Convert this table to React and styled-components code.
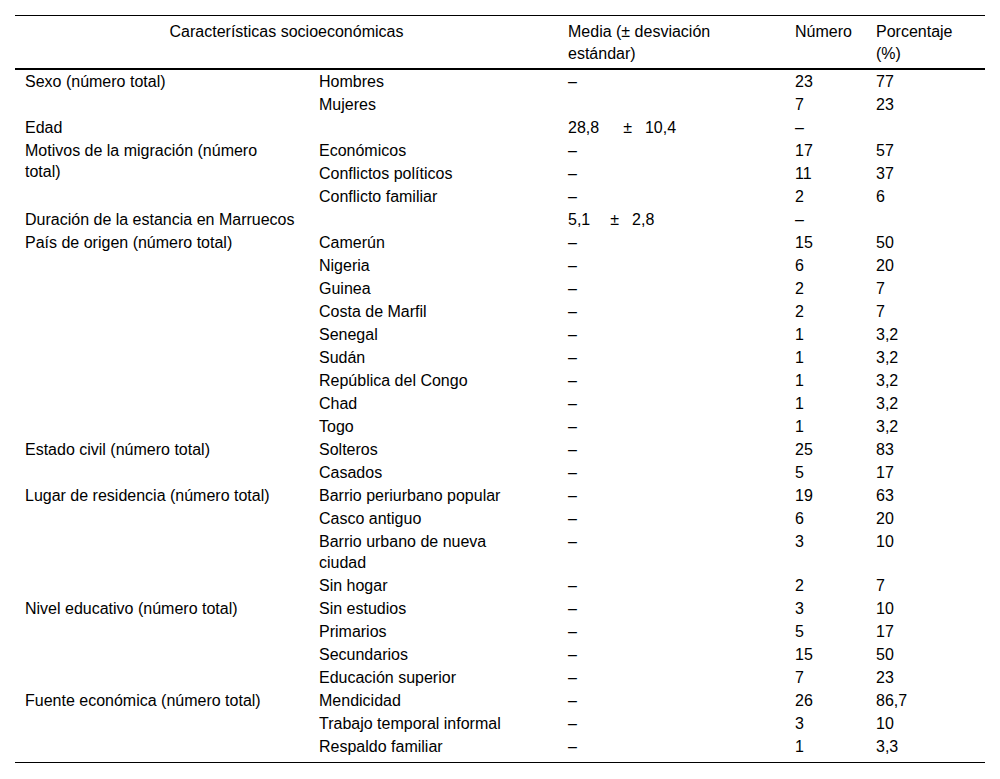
import React from "react";
import styled, { createGlobalStyle } from "styled-components";

const GlobalStyle = createGlobalStyle`
  html, body {
    margin: 0;
    padding: 0;
    background: #ffffff;
  }
  body {
    font-family: "Liberation Sans", Arial, sans-serif;
    font-size: 16px;
    color: #000;
  }
`;

const Page = styled.div`
  padding: 15px;
`;

const Table = styled.table`
  width: 970px;
  table-layout: fixed;
  border-collapse: collapse;
  border-top: 1px solid #000;
  border-bottom: 1px solid #000;
`;

const HeadRow = styled.tr`
  border-bottom: 2px solid #000;
`;

const HeadCell = styled.th`
  font-weight: normal;
  text-align: ${(p) => (p.$center ? "center" : "left")};
  vertical-align: top;
  line-height: 22px;
  padding: 5px ${(p) => (p.$center ? "10px" : p.$narrow ? "4px" : "24px")} 3px 10px;
`;

const Body = styled.tbody`
  tr:last-child td {
    padding-bottom: 5px;
  }
`;

const Cell = styled.td`
  vertical-align: top;
  line-height: 21px;
  padding: 1px ${(p) => (p.$narrow ? "4px" : "24px")} 1px 10px;
`;

const Mean = styled.span`
  display: inline-flex;
  white-space: nowrap;
`;

const Part = styled.span`
  margin-left: ${(p) => p.$gap || 0}px;
`;

const D = "–";

const groups = [
  {
    label: "Sexo (número total)",
    items: [
      ["Hombres", D, "23", "77"],
      ["Mujeres", "", "7", "23"],
    ],
  },
  { label: "Edad", mean: { a: "28,8", g1: 24, g2: 13, b: "10,4" }, n: D, p: "" },
  {
    label: "Motivos de la migración (número total)",
    items: [
      ["Económicos", D, "17", "57"],
      ["Conflictos políticos", D, "11", "37"],
      ["Conflicto familiar", D, "2", "6"],
    ],
  },
  {
    label: "Duración de la estancia en Marruecos",
    mean: { a: "5,1", g1: 20, g2: 13, b: "2,8" },
    n: D,
    p: "",
  },
  {
    label: "País de origen (número total)",
    items: [
      ["Camerún", D, "15", "50"],
      ["Nigeria", D, "6", "20"],
      ["Guinea", D, "2", "7"],
      ["Costa de Marfil", D, "2", "7"],
      ["Senegal", D, "1", "3,2"],
      ["Sudán", D, "1", "3,2"],
      ["República del Congo", D, "1", "3,2"],
      ["Chad", D, "1", "3,2"],
      ["Togo", D, "1", "3,2"],
    ],
  },
  {
    label: "Estado civil (número total)",
    items: [
      ["Solteros", D, "25", "83"],
      ["Casados", D, "5", "17"],
    ],
  },
  {
    label: "Lugar de residencia (número total)",
    items: [
      ["Barrio periurbano popular", D, "19", "63"],
      ["Casco antiguo", D, "6", "20"],
      ["Barrio urbano de nueva ciudad", D, "3", "10"],
      ["Sin hogar", D, "2", "7"],
    ],
  },
  {
    label: "Nivel educativo (número total)",
    items: [
      ["Sin estudios", D, "3", "10"],
      ["Primarios", D, "5", "17"],
      ["Secundarios", D, "15", "50"],
      ["Educación superior", D, "7", "23"],
    ],
  },
  {
    label: "Fuente económica (número total)",
    items: [
      ["Mendicidad", D, "26", "86,7"],
      ["Trabajo temporal informal", D, "3", "10"],
      ["Respaldo familiar", D, "1", "3,3"],
    ],
  },
];

function GroupRows({ group }) {
  if (!group.items) {
    const m = group.mean;
    return (
      <tr>
        <Cell colSpan={2}>{group.label}</Cell>
        <Cell>
          <Mean>
            <span>{m.a}</span>
            <Part $gap={m.g1}>±</Part>
            <Part $gap={m.g2}>{m.b}</Part>
          </Mean>
        </Cell>
        <Cell $narrow>{group.n}</Cell>
        <Cell>{group.p}</Cell>
      </tr>
    );
  }
  return group.items.map((it, i) => (
    <tr key={it[0]}>
      {i === 0 && <Cell rowSpan={group.items.length}>{group.label}</Cell>}
      <Cell>{it[0]}</Cell>
      <Cell>{it[1]}</Cell>
      <Cell $narrow>{it[2]}</Cell>
      <Cell>{it[3]}</Cell>
    </tr>
  ));
}

export default function App() {
  return (
    <Page>
      <GlobalStyle />
      <Table>
        <colgroup>
          <col style={{ width: 294 }} />
          <col style={{ width: 249 }} />
          <col style={{ width: 227 }} />
          <col style={{ width: 81 }} />
          <col style={{ width: 119 }} />
        </colgroup>
        <thead>
          <HeadRow>
            <HeadCell colSpan={2} $center>
              Características socioeconómicas
            </HeadCell>
            <HeadCell>Media (± desviación estándar)</HeadCell>
            <HeadCell $narrow>Número</HeadCell>
            <HeadCell>Porcentaje (%)</HeadCell>
          </HeadRow>
        </thead>
        <Body>
          {groups.map((g) => (
            <GroupRows key={g.label} group={g} />
          ))}
        </Body>
      </Table>
    </Page>
  );
}
